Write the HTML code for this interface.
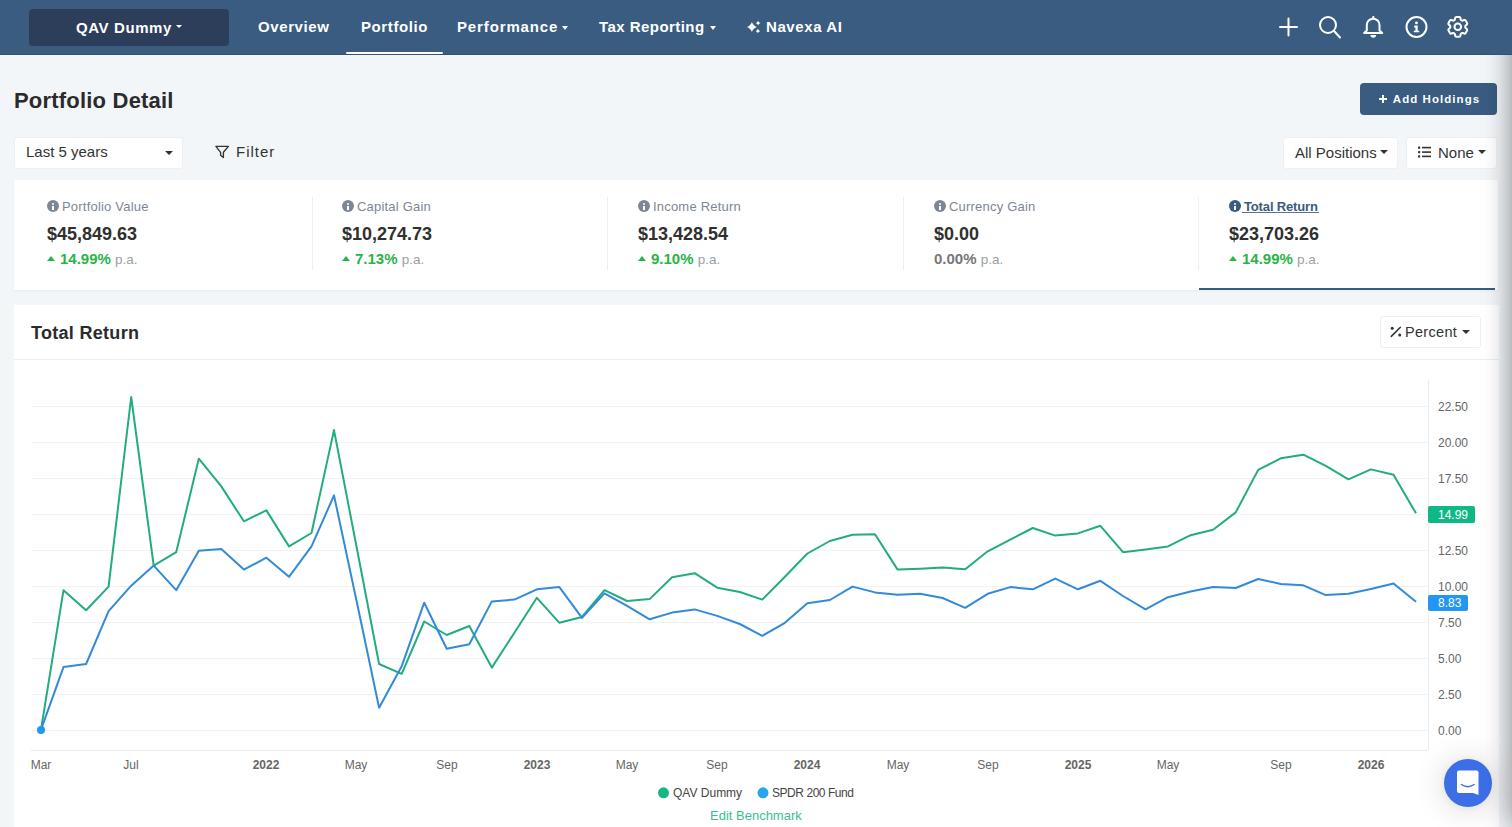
<!DOCTYPE html>
<html><head><meta charset="utf-8">
<style>
*{box-sizing:border-box;margin:0;padding:0}
html,body{width:1512px;height:827px;overflow:hidden}
body{background:#f3f6f9;font-family:"Liberation Sans",sans-serif;color:#333;position:relative}
.abs{position:absolute}
.nav{position:absolute;z-index:5;left:0;top:0;width:1512px;height:55px;background:#395c80;border-bottom:1px solid #34526f}
.acct{position:absolute;left:29px;top:9px;width:200px;height:37px;background:#2d3e5a;border-radius:4px;color:#fff;font-weight:bold;font-size:15px;letter-spacing:0.6px;line-height:38px;text-align:center}
.navi{position:absolute;top:18px;color:#fff;font-weight:bold;font-size:15px;letter-spacing:0.6px;line-height:18px;white-space:nowrap}
.caret{position:absolute;width:0;height:0;border-left:3.5px solid transparent;border-right:3.5px solid transparent;border-top:4px solid #fff}
.caret.d{border-top-color:#333;border-left-width:4px;border-right-width:4px;border-top-width:4.5px}
.uline{position:absolute;left:346px;top:51.5px;width:97px;height:2.5px;background:#fff;border-radius:1px}
.title{position:absolute;left:14px;top:88px;letter-spacing:0.2px;font-size:22px;font-weight:bold;color:#2b2b2b;line-height:26px;white-space:nowrap}
.btn{position:absolute;left:1360px;top:83px;width:137px;height:32px;background:#395c80;border-radius:4px;color:#fff;font-weight:bold;font-size:11.5px;letter-spacing:1.2px;line-height:32px;text-align:center;white-space:nowrap}
.sel{position:absolute;background:#fff;border:1px solid #edf0f3;border-radius:3px;height:32px;top:137px;font-size:15px;color:#333;line-height:30px;white-space:nowrap}
.card{position:absolute;background:#fff}
.stat{position:absolute;top:180px;height:110px}
.lbl{position:absolute;top:199px;letter-spacing:0.2px;font-size:13px;color:#7d8794;line-height:16px;white-space:nowrap}
.ico{display:inline-block;width:12px;height:12px;border-radius:50%;background:#7d8794;vertical-align:-1px;margin-right:3px;position:relative}
.ico:before{content:"";position:absolute;left:5px;top:2.5px;width:2px;height:2px;background:#fff;border-radius:1px}
.ico:after{content:"";position:absolute;left:5px;top:5.5px;width:2px;height:4px;background:#fff}
.val{position:absolute;top:224px;font-size:18px;font-weight:bold;color:#303030;line-height:20px;white-space:nowrap}
.pct{position:absolute;top:250px;font-size:15px;font-weight:bold;color:#28b446;line-height:18px;white-space:nowrap}
.pa{font-weight:normal;color:#9aa0a6;font-size:13.5px}
.up{display:inline-block;width:0;height:0;border-left:4.5px solid transparent;border-right:4.5px solid transparent;border-bottom:5px solid #28b446;vertical-align:middle;margin-right:5px;position:relative;top:-2px}
.div{position:absolute;top:197px;width:1px;height:73px;background:#eceef1}
.ylab{position:absolute;left:1438px;font-size:12px;color:#666;line-height:14px}
.xlab{position:absolute;top:757.5px;font-size:12px;color:#666;line-height:14px;transform:translateX(-50%);white-space:nowrap}
.xlab.b{font-weight:bold}
</style></head><body>
<div class="nav">
  <div class="acct" style="padding-right:10px">QAV Dummy</div><div class="caret" style="left:175.5px;top:24.5px;border-top-width:3.5px"></div>
  <div class="navi" style="left:258px">Overview</div>
  <div class="navi" style="left:361px">Portfolio</div>
  <div class="navi" style="left:457px;letter-spacing:0.87px">Performance</div><div class="caret" style="left:562px;top:26px"></div>
  <div class="navi" style="left:599px;letter-spacing:0.45px">Tax Reporting</div><div class="caret" style="left:710px;top:26px"></div>
  <svg class="abs" style="left:745px;top:19px" width="17" height="16" viewBox="745 19 17 16" fill="#fff">
    <path d="M751.9 22.1C752.74 24.58 754.42 26.26 756.9 27.1C754.42 27.94 752.74 29.62 751.9 32.1C751.06 29.62 749.38 27.94 746.9 27.1C749.38 26.26 751.06 24.58 751.9 22.1Z"/>
    <path d="M758.1 20.700000000000003C758.53 21.80 759.40 22.67 760.5 23.1C759.40 23.53 758.53 24.40 758.1 25.5C757.67 24.40 756.80 23.53 755.7 23.1C756.80 22.67 757.67 21.80 758.1 20.700000000000003Z"/>
    <path d="M757.9 28.7C758.31 29.76 759.14 30.59 760.1999999999999 31.0C759.14 31.41 758.31 32.24 757.9 33.3C757.49 32.24 756.66 31.41 755.6 31.0C756.66 30.59 757.49 29.76 757.9 28.7Z"/>
  </svg>
  <div class="navi" style="left:766px">Navexa AI</div>
  <div class="uline"></div>
  <svg class="abs" style="left:1260px;top:0" width="252" height="55" viewBox="1260 0 252 55" fill="none" stroke="#fff" stroke-width="2" stroke-linecap="round">
    <path d="M1280 27H1297M1288.5 18.5V35.5"/>
    <circle cx="1328" cy="25" r="8"/><path d="M1334 31L1340 37.5"/>
    <rect x="1372.1" y="15.9" width="2.4" height="2.8" rx="1" fill="#fff" stroke="none"/><path d="M1366.8 30.6V25A6.35 6.35 0 0 1 1379.5 25V30.6L1382.2 33H1364.1Z" stroke-linejoin="round"/>
    <path d="M1370.5 35h5.6a2.8 2.8 0 0 1-5.6 0z" fill="#fff" stroke="none"/>
    <g transform="translate(1444.6 13.6) scale(1.1)" fill="none" stroke="#fff" stroke-width="1.85" stroke-linecap="round" stroke-linejoin="round">
   <path d="M9.594 3.94c.09-.542.56-.94 1.11-.94h2.593c.55 0 1.02.398 1.11.94l.213 1.281c.063.374.313.686.645.87.074.04.147.083.22.127.325.196.72.257 1.075.124l1.217-.456a1.125 1.125 0 0 1 1.37.49l1.296 2.247a1.125 1.125 0 0 1-.26 1.431l-1.003.827c-.293.241-.438.613-.43.992a7.723 7.723 0 0 1 0 .255c-.008.378.137.75.43.991l1.004.827c.424.35.534.955.26 1.43l-1.298 2.247a1.125 1.125 0 0 1-1.369.491l-1.217-.456c-.355-.133-.75-.072-1.076.124a6.47 6.47 0 0 1-.22.128c-.331.183-.581.495-.644.869l-.213 1.281c-.09.543-.56.94-1.11.94h-2.594c-.55 0-1.019-.398-1.11-.94l-.213-1.281c-.062-.374-.312-.686-.644-.87a6.52 6.52 0 0 1-.22-.127c-.325-.196-.72-.257-1.076-.124l-1.217.456a1.125 1.125 0 0 1-1.369-.49l-1.297-2.247a1.125 1.125 0 0 1 .26-1.431l1.004-.827c.292-.24.437-.613.43-.991a6.932 6.932 0 0 1 0-.255c.007-.38-.138-.751-.43-.992l-1.004-.827a1.125 1.125 0 0 1-.26-1.43l1.297-2.247a1.125 1.125 0 0 1 1.37-.491l1.216.456c.356.133.751.072 1.076-.124.072-.044.146-.086.22-.128.332-.183.582-.495.644-.869l.214-1.28Z"/>
   <path d="M15 12a3 3 0 1 1-6 0 3 3 0 0 1 6 0Z"/>
  </g>
    <circle cx="1416.5" cy="27" r="10"/>
    <circle cx="1416.5" cy="22.9" r="1.4" fill="#fff" stroke="none"/>
    <path d="M1414.2 25.6H1417.7V30.7H1419.2V32.3H1413.8V30.7H1415.4V27.4H1414.2Z" fill="#fff" stroke="none"/>
  </svg>
</div>
<div class="title">Portfolio Detail</div>
<div class="btn" style="padding-left:16px;letter-spacing:1.05px">Add Holdings</div><svg class="abs" style="left:1378px;top:94px" width="10" height="10" viewBox="0 0 10 10"><path d="M1 5H9M5 1V9" stroke="#fff" stroke-width="2"/></svg>
<div class="sel" style="left:14px;width:169px;padding-left:11px;line-height:28px">Last 5 years</div>
<div class="abs" style="left:215px;top:143px;font-size:15px;letter-spacing:1px;color:#333;line-height:18px">
</div>
<div class="abs" style="left:236px;top:143px;font-size:15px;letter-spacing:1.0px;color:#333;line-height:18px">Filter</div>
<div class="sel" style="left:1283px;width:115px;padding-left:11px">All Positions</div>
<div class="sel" style="left:1406px;width:91px;padding-left:31px;line-height:29px">None</div>

<div class="card" style="left:14px;top:180px;width:1484px;height:110px;box-shadow:0 1px 3px rgba(30,40,60,.05)"></div>
<div class="div" style="left:312px"></div>
<div class="div" style="left:607px"></div>
<div class="div" style="left:903px"></div>
<div class="div" style="left:1198px"></div>
<div class="abs" style="left:1199px;top:287.5px;width:296px;height:2.5px;background:#395c80"></div>

<div class="lbl" style="left:47px"><span class="ico"></span>Portfolio Value</div>
<div class="val" style="left:47px">$45,849.63</div>
<div class="pct" style="left:47px"><span class="up"></span>14.99% <span class="pa">p.a.</span></div>
<div class="lbl" style="left:342px"><span class="ico"></span>Capital Gain</div>
<div class="val" style="left:342px">$10,274.73</div>
<div class="pct" style="left:342px"><span class="up"></span>7.13% <span class="pa">p.a.</span></div>
<div class="lbl" style="left:638px"><span class="ico"></span>Income Return</div>
<div class="val" style="left:638px">$13,428.54</div>
<div class="pct" style="left:638px"><span class="up"></span>9.10% <span class="pa">p.a.</span></div>
<div class="lbl" style="left:934px"><span class="ico"></span>Currency Gain</div>
<div class="val" style="left:934px">$0.00</div>
<div class="pct" style="left:934px;color:#777">0.00% <span class="pa">p.a.</span></div>
<div class="abs" style="left:1242px;top:212px;width:77px;height:1px;background:#5a7391"></div><div class="lbl" style="left:1229px;color:#395c80;font-weight:bold;letter-spacing:-0.15px"><span class="ico" style="background:#395c80"></span>Total Return</div>
<div class="val" style="left:1229px">$23,703.26</div>
<div class="pct" style="left:1229px"><span class="up"></span>14.99% <span class="pa">p.a.</span></div>


<div class="caret d" style="left:165px;top:150.5px;border-left-width:4px;border-right-width:4px;border-top-width:4.5px"></div>
<div class="caret d" style="left:1379.8px;top:150.2px"></div>
<div class="caret d" style="left:1478px;top:150.2px"></div>
<svg class="abs" style="left:0;top:0" width="1512" height="400" viewBox="0 0 1512 400">
  <path d="M215.9 146.4H228.4L223.4 152.3V157.6L220.6 155.2V152.3Z" fill="none" stroke="#333" stroke-width="1.35" stroke-linejoin="round"/>
  <g fill="#333"><rect x="1418" y="146.5" width="2.2" height="2.2" rx=".4"/><rect x="1418" y="151" width="2.2" height="2.2" rx=".4"/><rect x="1418" y="155.3" width="2.2" height="2.2" rx=".4"/>
  <rect x="1422" y="146.8" width="9" height="1.6"/><rect x="1422" y="151.3" width="9" height="1.6"/><rect x="1422" y="155.6" width="9" height="1.6"/></g>
</svg>
<div class="card" style="left:13px;top:304px;width:1487px;height:530px;border:1px solid #f6f7f9"></div>
<div class="abs" style="left:14px;top:359px;width:1485px;height:1px;background:#eceef1"></div>
<div class="abs" style="left:31px;top:322px;letter-spacing:0.3px;font-size:18px;font-weight:bold;color:#2b2b2b;line-height:22px">Total Return</div>
<div class="sel" style="left:1380px;top:316px;width:101px;padding-left:24px;font-size:14.5px;letter-spacing:0.3px">Percent</div>
<div class="caret d" style="left:1461.8px;top:330px"></div>
<svg class="abs" style="left:1385px;top:322px" width="20" height="20" viewBox="1385 322 20 20">
  <circle cx="1392.2" cy="328.3" r="1.5" fill="#333"/><circle cx="1399.7" cy="335.1" r="1.5" fill="#333"/>
  <path d="M1391.3 336.4L1400.4 327.3" stroke="#333" stroke-width="1.5" stroke-linecap="round"/>
</svg>

<svg class="abs" style="left:0;top:0" width="1512" height="827" viewBox="0 0 1512 827">
  <g stroke="#f2f2f2" stroke-width="1">
    <path d="M31 406.5H1428M31 442.5H1428M31 478.5H1428M31 514.5H1428M31 550.5H1428M31 586.5H1428M31 622.5H1428M31 658.5H1428M31 694.5H1428M31 730.5H1428"/>
    <path d="M31 750.5H1428M1428.5 380V750" stroke="#ebebeb"/>
  </g>
  <polyline fill="none" stroke="#22ac80" stroke-width="2" stroke-linejoin="round" points="41.0,729.7 63.5,590.2 86.1,610.3 108.6,586.6 131.2,397.0 153.7,565.6 176.2,552.2 198.8,458.7 221.3,486.4 243.9,521.3 266.4,510.4 289.0,546.4 311.5,533.0 334.0,430.1 356.6,547.0 379.1,664.0 401.7,673.8 424.2,621.5 446.7,635.0 469.3,626.0 491.8,667.6 514.4,632.7 536.9,597.8 559.4,622.8 582.0,617.0 604.5,590.2 627.1,601.0 649.6,599.1 672.1,577.2 694.7,573.2 717.2,587.7 739.8,592.0 762.3,599.6 784.9,576.8 807.4,553.5 829.9,541.0 852.5,534.7 875.0,534.3 897.6,569.6 920.1,568.7 942.6,567.6 965.2,569.2 987.7,551.3 1010.3,539.7 1032.8,528.0 1055.3,535.6 1077.9,533.4 1100.4,525.8 1123.0,552.2 1145.5,549.5 1168.0,546.4 1190.6,535.2 1213.1,529.8 1235.7,512.4 1258.2,469.9 1280.8,458.3 1303.3,454.7 1325.8,465.9 1348.4,479.3 1370.9,469.4 1393.5,474.8 1416.0,513.3"/>
  <polyline fill="none" stroke="#338ad7" stroke-width="2" stroke-linejoin="round" points="41.0,729.7 63.5,667.1 86.1,664.0 108.6,611.2 131.2,585.7 153.7,565.6 176.2,590.2 198.8,550.8 221.3,549.0 243.9,569.6 266.4,557.7 289.0,576.8 311.5,546.4 334.0,495.4 356.6,601.0 379.1,707.8 401.7,666.2 424.2,602.7 446.7,648.8 469.3,644.3 491.8,601.4 514.4,599.6 536.9,589.3 559.4,587.1 582.0,617.9 604.5,593.3 627.1,605.8 649.6,619.3 672.1,612.6 694.7,609.4 717.2,615.9 739.8,624.0 762.3,635.8 784.9,622.8 807.4,603.2 829.9,600.0 852.5,586.6 875.0,592.4 897.6,594.7 920.1,593.8 942.6,598.0 965.2,607.8 987.7,593.8 1010.3,587.1 1032.8,589.3 1055.3,578.6 1077.9,589.3 1100.4,580.8 1123.0,596.0 1145.5,609.4 1168.0,597.2 1190.6,591.5 1213.1,587.1 1235.7,588.0 1258.2,579.0 1280.8,583.9 1303.3,585.3 1325.8,595.1 1348.4,593.8 1370.9,588.9 1393.5,583.5 1416.0,601.8"/>
  <circle cx="41" cy="730" r="4" fill="#2196f3"/>
  <rect x="1428" y="506" width="47" height="17" rx="2" fill="#0fb886"/>
  <rect x="1428" y="595" width="40" height="16" rx="2" fill="#2196f3"/>
  <circle cx="663.5" cy="792.8" r="5.5" fill="#17b584"/>
  <circle cx="763" cy="792.8" r="5.5" fill="#25a6ee"/>
</svg>
<div class="ylab" style="top:400px">22.50</div>
<div class="ylab" style="top:436px">20.00</div>
<div class="ylab" style="top:472px">17.50</div>
<div class="ylab" style="top:544px">12.50</div>
<div class="ylab" style="top:580px">10.00</div>
<div class="ylab" style="top:616px">7.50</div>
<div class="ylab" style="top:652px">5.00</div>
<div class="ylab" style="top:688px">2.50</div>
<div class="ylab" style="top:724px">0.00</div>
<div class="ylab" style="top:508px;color:#fff">14.99</div>
<div class="ylab" style="top:596px;color:#fff">8.83</div>
<div class="xlab" style="left:41px">Mar</div>
<div class="xlab" style="left:131px">Jul</div>
<div class="xlab b" style="left:266px">2022</div>
<div class="xlab" style="left:356px">May</div>
<div class="xlab" style="left:447px">Sep</div>
<div class="xlab b" style="left:537px">2023</div>
<div class="xlab" style="left:627px">May</div>
<div class="xlab" style="left:717px">Sep</div>
<div class="xlab b" style="left:807px">2024</div>
<div class="xlab" style="left:898px">May</div>
<div class="xlab" style="left:988px">Sep</div>
<div class="xlab b" style="left:1078px">2025</div>
<div class="xlab" style="left:1168px">May</div>
<div class="xlab" style="left:1281px">Sep</div>
<div class="xlab b" style="left:1371px">2026</div>
<div class="abs" style="left:673px;top:786px;font-size:12px;color:#444;line-height:14px;white-space:nowrap">QAV Dummy</div>
<div class="abs" style="left:772px;top:786px;letter-spacing:-0.45px;font-size:12px;color:#444;line-height:14px;white-space:nowrap">SPDR 200 Fund</div>
<div class="abs" style="left:710px;top:809px;font-size:13px;color:#3dbd8f;line-height:14px;white-space:nowrap">Edit Benchmark</div>
<div class="abs" style="left:1444px;top:759px;width:48px;height:48px;border-radius:50%;background:#3c6ee6;box-shadow:0 1px 6px rgba(0,0,0,.06),0 2px 32px rgba(0,0,0,.16)"></div>
<svg class="abs" style="left:1442px;top:759px" width="48" height="48" viewBox="0 0 48 48">
  <path d="M15 13.5a2 2 0 0 1 2-2h17.5a2 2 0 0 1 2 2V36l-5.5-2H17a2 2 0 0 1-2-2z" fill="#fff"/>
  <path d="M19.5 25.5q6.3 4.5 12.6 0" fill="none" stroke="#3c6ee6" stroke-width="1.5" stroke-linecap="round"/>
</svg>
<div class="abs" style="left:1512px;top:0;width:200px;height:827px;box-shadow:0 0 26px rgba(0,0,0,.48)"></div>
</body></html>
